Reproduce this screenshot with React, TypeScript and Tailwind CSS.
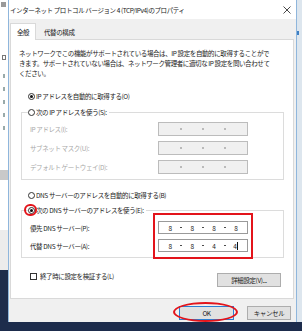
import React from "react";

const jp = "font-['Noto_Sans_CJK_JP','Noto_Sans',sans-serif]";

function Radio({ checked }: { checked?: boolean }) {
  return (
    <span className="flex h-[7px] w-[7px] shrink-0 items-center justify-center rounded-full border border-[#333] bg-white">
      {checked && <span className="h-[3px] w-[3px] rounded-full bg-[#111]" />}
    </span>
  );
}

function RadioRow({ checked, label }: { checked?: boolean; label: string }) {
  return (
    <span className="flex h-[10px] items-center gap-[1px] whitespace-nowrap text-[#1a1a1a]">
      <Radio checked={checked} />
      <span>{label}</span>
    </span>
  );
}

function IpField({ values, disabled, caret }: { values: string[]; disabled?: boolean; caret?: boolean }) {
  return (
    <div
      className={
        "flex w-[90px] items-center border px-[1px] " +
        (disabled ? "h-[14px] border-[#bcbcbc] bg-[#f0f0f0]" : "h-[13px] border-[#9a9a9a] bg-white")
      }
    >
      {values.map((v, i) => (
        <React.Fragment key={i}>
          <span className="flex flex-1 items-center justify-center text-[#222]">
            {v}
            {caret && i === 3 && <span className="ml-[1px] h-[8px] w-px bg-[#111]" />}
          </span>
          {i < 3 && (
            <span className={"h-[1.5px] w-[1.5px] rounded-full " + (disabled ? "bg-[#a8a8a8]" : "bg-[#333]")} />
          )}
        </React.Fragment>
      ))}
    </div>
  );
}

function FieldRow({ label, children, disabled }: { label: string; children: React.ReactNode; disabled?: boolean }) {
  return (
    <div className="flex items-center">
      <span className={"w-[128px] whitespace-nowrap " + (disabled ? "text-[#a8a8a8]" : "text-[#1a1a1a]")}>
        {label}
      </span>
      {children}
    </div>
  );
}

function Button({ label, primary, className }: { label: string; primary?: boolean; className?: string }) {
  return (
    <button
      className={
        "flex h-[14px] items-center justify-center border bg-[#e1e1e1] text-[#1a1a1a] " +
        (primary ? "border-[#2b7fd4] " : "border-[#adadad] ") +
        (className ?? "")
      }
    >
      {label}
    </button>
  );
}

export default function App() {
  const empty = ["", "", "", ""];
  return (
    <div className={"relative flex h-[331px] w-[302px] flex-col overflow-hidden bg-[#1d2c4c] text-[6.5px] leading-[10px] tracking-[-0.4px] " + jp}>
      <div className="flex h-[322px]">
        {/* background window on the left */}
        <div className="flex w-[8px] flex-col bg-white">
          <div className="ml-[1px] mt-[2px] h-[5px] w-[5px] bg-[#9a9a9a]" />
          <div className="ml-[2px] mt-[48px] h-[5px] w-[4px] border border-[#777]" />
          <div className="ml-[3px] mt-[14px] flex flex-col gap-[9px]">
            <span className="h-[4px] w-[2px] bg-[#9aa]" />
            <span className="h-[4px] w-[2px] bg-[#9aa]" />
            <span className="h-[4px] w-[2px] bg-[#9aa]" />
            <span className="h-[4px] w-[2px] bg-[#9aa]" />
            <span className="h-[4px] w-[2px] bg-[#9aa]" />
          </div>
          <div className="mt-[40px] h-[10px] bg-[#c9c9c9]" />
          <div className="mt-[50px] h-[40px] bg-[#ececec]" />
          <div className="flex-1 bg-[#1d2c4c]" />
        </div>

        {/* dialog */}
        <div className="flex w-[289px] flex-col border-x border-[#8fb6dc] bg-[#f0f0f0]">
          <div className="flex h-[19px] items-center justify-between bg-white pl-[1px] pr-[5px] text-[#1a1a1a]">
            <span className="whitespace-nowrap">インターネット プロトコル バージョン 4 (TCP/IPv4)のプロパティ</span>
            <svg width="8" height="8" viewBox="0 0 8 8" className="mt-[1px]">
              <path d="M0.5 0.5 L7.5 7.5 M7.5 0.5 L0.5 7.5" stroke="#333" strokeWidth="0.9" />
            </svg>
          </div>

          <div className="mt-[4px] flex items-end pl-[1px]">
            <div className="relative z-10 -mb-px flex h-[17px] w-[26px] items-center justify-center border border-b-0 border-[#d9d9d9] bg-white text-[#1a1a1a]">
              全般
            </div>
            <div className="flex h-[14px] items-center pl-[8px] text-[#1a1a1a]">代替の構成</div>
          </div>

          <div className="ml-[1px] flex h-[260px] w-[284px] flex-col border border-[#d9d9d9] bg-white">
            <p className="whitespace-nowrap pl-[8px] pt-[8px] text-[#1a1a1a]">
              ネットワークでこの機能がサポートされている場合は、IP 設定を自動的に取得することがで
              <br />
              きます。サポートされていない場合は、ネットワーク管理者に適切な IP 設定を問い合わせて
              <br />
              ください。
            </p>

            <div className="mt-[13px] pl-[17px]">
              <RadioRow checked label="IP アドレスを自動的に取得する(O)" />
            </div>

            <fieldset className="ml-[10px] mt-[6px] w-[263px] border border-[#dcdcdc] pb-[5px] pl-[8px]">
              <legend className="-ml-[2px] pr-[2px]">
                <RadioRow label="次の IP アドレスを使う(S):" />
              </legend>
              <div className="flex flex-col gap-[5px] pt-[5px]">
                <FieldRow label="IP アドレス(I):" disabled>
                  <IpField values={empty} disabled />
                </FieldRow>
                <FieldRow label="サブネット マスク(U):" disabled>
                  <IpField values={empty} disabled />
                </FieldRow>
                <FieldRow label="デフォルト ゲートウェイ(D):" disabled>
                  <IpField values={empty} disabled />
                </FieldRow>
              </div>
            </fieldset>

            <div className="mt-[10px] pl-[17px]">
              <RadioRow label="DNS サーバーのアドレスを自動的に取得する(B)" />
            </div>

            <fieldset className="ml-[10px] mt-[5px] w-[263px] border border-[#dcdcdc] pb-[5px] pl-[8px]">
              <legend className="-ml-[2px] pr-[2px]">
                <RadioRow checked label="次の DNS サーバーのアドレスを使う(E):" />
              </legend>
              <div className="flex flex-col gap-[5px] pt-[6px]">
                <FieldRow label="優先 DNS サーバー(P):">
                  <IpField values={["8", "8", "8", "8"]} />
                </FieldRow>
                <FieldRow label="代替 DNS サーバー(A):">
                  <IpField values={["8", "8", "4", "4"]} caret />
                </FieldRow>
              </div>
            </fieldset>

            <div className="flex items-start justify-between pl-[19px] pr-[12px]">
              <span className="mt-[13px] flex h-[10px] items-center gap-[3px] text-[#1a1a1a]">
                <span className="h-[7px] w-[7px] border border-[#333] bg-white" />
                終了時に設定を検証する(L)
              </span>
              <Button label="詳細設定(V)..." className="mt-[15px] w-[64px]" />
            </div>
          </div>

          <div className="flex justify-end gap-[13px] pr-[5px] pt-[7px]">
            <Button label="OK" primary className="w-[55px]" />
            <Button label="キャンセル" className="w-[44px]" />
          </div>
        </div>

        {/* background on the right */}
        <div className="flex flex-1 flex-col bg-[#dde6ee]">
          <div className="mt-[31px] h-[4px] w-[2px] bg-[#3d7fc4]" />
        </div>
      </div>
      <div className="flex-1 bg-[#1d2c4c]" />

      {/* red annotations */}
      <div className="absolute left-[24px] top-[204px] h-[12px] w-[13px] rounded-full border-2 border-[#e3141b]" />
      <div className="absolute left-[153px] top-[213px] h-[46px] w-[100px] border-2 border-[#e3141b]" />
      <div className="absolute left-[173px] top-[302px] h-[20px] w-[65px] rounded-[50%] border-2 border-[#e3141b]" />
    </div>
  );
}
